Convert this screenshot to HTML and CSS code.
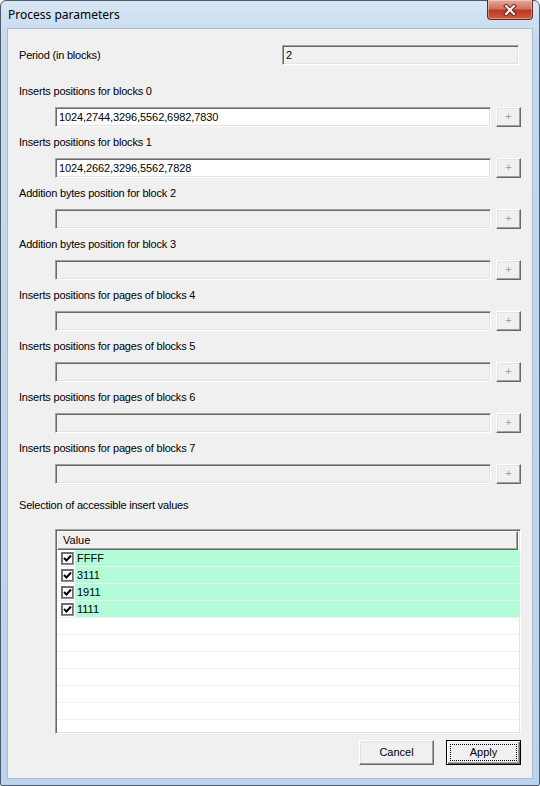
FILE: index.html
```html
<!DOCTYPE html>
<html>
<head>
    <title>Process parameters</title>
    <link rel="stylesheet" href="styles.css">
</head>
<body>
    <div class="window">
        <div class="titlebar">
            <span class="title">Process parameters</span>
            <div class="close-btn">
                <svg width="14" height="12" viewBox="0 0 14 12">
                    <path d="M3 2 L11 10 M11 2 L3 10" stroke="#5b2219" stroke-width="4" stroke-linecap="square" fill="none"/>
                    <path d="M3 2 L11 10 M11 2 L3 10" stroke="#ffffff" stroke-width="2" stroke-linecap="square" fill="none"/>
                </svg>
            </div>
        </div>
        <div class="client">
            <div class="period-row">
                <span class="label">Period (in blocks)</span>
                <div class="field field-disabled">2</div>
            </div>

            <div class="groups">
                <div class="group">
                    <div class="label">Inserts positions for blocks 0</div>
                    <div class="group-row">
                        <div class="field">1024,2744,3296,5562,6982,7830</div>
                        <div class="plus-btn">+</div>
                    </div>
                </div>
                <div class="group">
                    <div class="label">Inserts positions for blocks 1</div>
                    <div class="group-row">
                        <div class="field">1024,2662,3296,5562,7828</div>
                        <div class="plus-btn">+</div>
                    </div>
                </div>
                <div class="group">
                    <div class="label">Addition bytes position for block 2</div>
                    <div class="group-row">
                        <div class="field field-disabled"></div>
                        <div class="plus-btn">+</div>
                    </div>
                </div>
                <div class="group">
                    <div class="label">Addition bytes position for block 3</div>
                    <div class="group-row">
                        <div class="field field-disabled"></div>
                        <div class="plus-btn">+</div>
                    </div>
                </div>
                <div class="group">
                    <div class="label">Inserts positions for pages of blocks 4</div>
                    <div class="group-row">
                        <div class="field field-disabled"></div>
                        <div class="plus-btn">+</div>
                    </div>
                </div>
                <div class="group">
                    <div class="label">Inserts positions for pages of blocks 5</div>
                    <div class="group-row">
                        <div class="field field-disabled"></div>
                        <div class="plus-btn">+</div>
                    </div>
                </div>
                <div class="group">
                    <div class="label">Inserts positions for pages of blocks 6</div>
                    <div class="group-row">
                        <div class="field field-disabled"></div>
                        <div class="plus-btn">+</div>
                    </div>
                </div>
                <div class="group">
                    <div class="label">Inserts positions for pages of blocks 7</div>
                    <div class="group-row">
                        <div class="field field-disabled"></div>
                        <div class="plus-btn">+</div>
                    </div>
                </div>
            </div>

            <div class="label list-label">Selection of accessible insert values</div>

            <div class="list">
                <div class="list-header"><span class="header-cell">Value</span></div>
                <div class="list-row"><span class="checkbox"><svg width="9" height="9" viewBox="0 0 9 9"><path d="M1 4 L3.5 6.5 L8 1.5" stroke="#000" stroke-width="2" fill="none"/></svg></span><span class="cell">FFFF</span></div>
                <div class="list-row"><span class="checkbox"><svg width="9" height="9" viewBox="0 0 9 9"><path d="M1 4 L3.5 6.5 L8 1.5" stroke="#000" stroke-width="2" fill="none"/></svg></span><span class="cell">3111</span></div>
                <div class="list-row"><span class="checkbox"><svg width="9" height="9" viewBox="0 0 9 9"><path d="M1 4 L3.5 6.5 L8 1.5" stroke="#000" stroke-width="2" fill="none"/></svg></span><span class="cell">1911</span></div>
                <div class="list-row"><span class="checkbox"><svg width="9" height="9" viewBox="0 0 9 9"><path d="M1 4 L3.5 6.5 L8 1.5" stroke="#000" stroke-width="2" fill="none"/></svg></span><span class="cell">1111</span></div>
                <div class="list-row empty"></div>
                <div class="list-row empty"></div>
                <div class="list-row empty"></div>
                <div class="list-row empty"></div>
                <div class="list-row empty"></div>
                <div class="list-row empty"></div>
                <div class="list-row empty"></div>
                <div class="list-row empty"></div>
            </div>

            <div class="buttons">
                <div class="btn">Cancel</div>
                <div class="btn btn-default"><span class="focus">Apply</span></div>
            </div>
        </div>
    </div>
</body>
</html>
```

FILE: styles.css
```css
body {
    margin: 0;
    background-color: #ffffff;
    font-family: "Liberation Sans", Arial, sans-serif;
    font-size: 11px;
    color: #000;
}

.window {
    box-sizing: border-box;
    width: 540px;
    height: 786px;
    border: 1px solid #4c5c6e;
    border-radius: 6px 6px 2px 2px;
    padding: 0 6px 6px 6px;
    background: linear-gradient(to bottom, #d9e6f4, #c4d9ef 40px, #bcd3ec);
    display: flex;
    flex-direction: column;
}

.titlebar {
    height: 27px;
    display: flex;
    align-items: flex-start;
    justify-content: space-between;
    flex-shrink: 0;
}

.title {
    font-family: "Noto Sans", sans-serif;
    font-size: 12px;
    line-height: 14px;
    margin-top: 7px;
    margin-left: 1px;
    color: #000;
}

.close-btn {
    box-sizing: border-box;
    width: 46px;
    height: 20px;
    margin-top: -1px;
    border: 1px solid #5f2a22;
    border-top: none;
    border-radius: 0 0 4px 4px;
    background: linear-gradient(to bottom, #e7a99a, #d0725e 45%, #bb3a22 55%, #cc5b3a);
    display: flex;
    align-items: center;
    justify-content: center;
    box-shadow: inset 0 0 0 1px rgba(255, 255, 255, 0.35);
}

.client {
    flex: 1;
    border: 1px solid #a9bdd3;
    background-color: #f0f0f0;
    padding: 16px 11px 0 11px;
    display: flex;
    flex-direction: column;
}

.label {
    line-height: 14px;
    height: 14px;
    white-space: nowrap;
    letter-spacing: -0.2px;
}

.period-row {
    height: 20px;
    display: flex;
    align-items: center;
    justify-content: space-between;
}

.period-row .field {
    width: 237px;
    margin-right: 2px;
}

.field {
    box-sizing: border-box;
    height: 20px;
    background-color: #ffffff;
    border: 1px solid;
    border-color: #a0a0a0 #ffffff #ffffff #a0a0a0;
    box-shadow: inset 1px 1px 0 #696969, inset -1px -1px 0 #e3e3e3;
    padding: 2px 0 0 3px;
    line-height: 15px;
    white-space: nowrap;
    overflow: hidden;
    letter-spacing: -0.1px;
}

.field-disabled {
    background-color: #f0f0f0;
}

.groups {
    margin-top: 19px;
    display: flex;
    flex-direction: column;
    gap: 8px;
}

.group .label {
    margin-bottom: 9px;
}

.group-row {
    display: flex;
    margin-left: 36px;
    gap: 5px;
}

.group-row .field {
    width: 436px;
}

.plus-btn {
    box-sizing: border-box;
    width: 25px;
    height: 20px;
    background-color: #f0f0f0;
    border: 1px solid;
    border-color: #ffffff #696969 #696969 #ffffff;
    box-shadow: inset -1px -1px 0 #a0a0a0, inset 1px 1px 0 #e3e3e3;
    color: #a0a0a0;
    text-align: center;
    line-height: 17px;
    font-size: 11px;
}

.list-label {
    margin-top: 14px;
}

.list {
    box-sizing: border-box;
    margin-top: 17px;
    margin-left: 36px;
    width: 466px;
    height: 205px;
    background-color: #ffffff;
    border: 1px solid;
    border-color: #a0a0a0 #ffffff #ffffff #a0a0a0;
    box-shadow: inset 1px 1px 0 #696969, inset -1px -1px 0 #e3e3e3;
    padding: 1px;
    overflow: hidden;
}

.list-header {
    box-sizing: border-box;
    height: 19px;
    display: flex;
}

.header-cell {
    box-sizing: border-box;
    flex: 1;
    margin-right: 1px;
    background-color: #f0f0f0;
    border: 1px solid;
    border-color: #ffffff #696969 #696969 #ffffff;
    box-shadow: inset -1px -1px 0 #a0a0a0;
    padding-left: 5px;
    line-height: 16px;
}

.list-row {
    box-sizing: border-box;
    height: 17px;
    border-bottom: 1px solid #f0f0f0;
    display: flex;
    align-items: center;
}

.checkbox {
    box-sizing: border-box;
    width: 13px;
    height: 13px;
    margin-left: 4px;
    margin-right: 1px;
    background-color: #ffffff;
    border: 1px solid;
    border-color: #707070 #909090 #909090 #707070;
    box-shadow: inset 0 0 0 1px #6d6d6d;
    display: flex;
    align-items: center;
    justify-content: center;
    flex-shrink: 0;
}

.cell {
    flex: 1;
    align-self: stretch;
    background-color: #b3fcd8;
    padding-left: 2px;
    line-height: 16px;
}

.buttons {
    margin-top: 6px;
    display: flex;
    justify-content: flex-end;
    gap: 12px;
}

.btn {
    box-sizing: border-box;
    width: 75px;
    height: 25px;
    background-color: #f0f0f0;
    border: 1px solid;
    border-color: #ffffff #696969 #696969 #ffffff;
    box-shadow: inset -1px -1px 0 #a0a0a0, inset 1px 1px 0 #e3e3e3;
    text-align: center;
    line-height: 22px;
}

.btn-default {
    border: 1px solid #000000;
    box-shadow: inset 1px 1px 0 #ffffff, inset -1px -1px 0 #696969, inset -2px -2px 0 #a0a0a0;
    padding: 3px;
    line-height: 15px;
}

.focus {
    display: block;
    box-sizing: border-box;
    height: 17px;
    border: 1px dotted #000000;
    line-height: 15px;
}
```
